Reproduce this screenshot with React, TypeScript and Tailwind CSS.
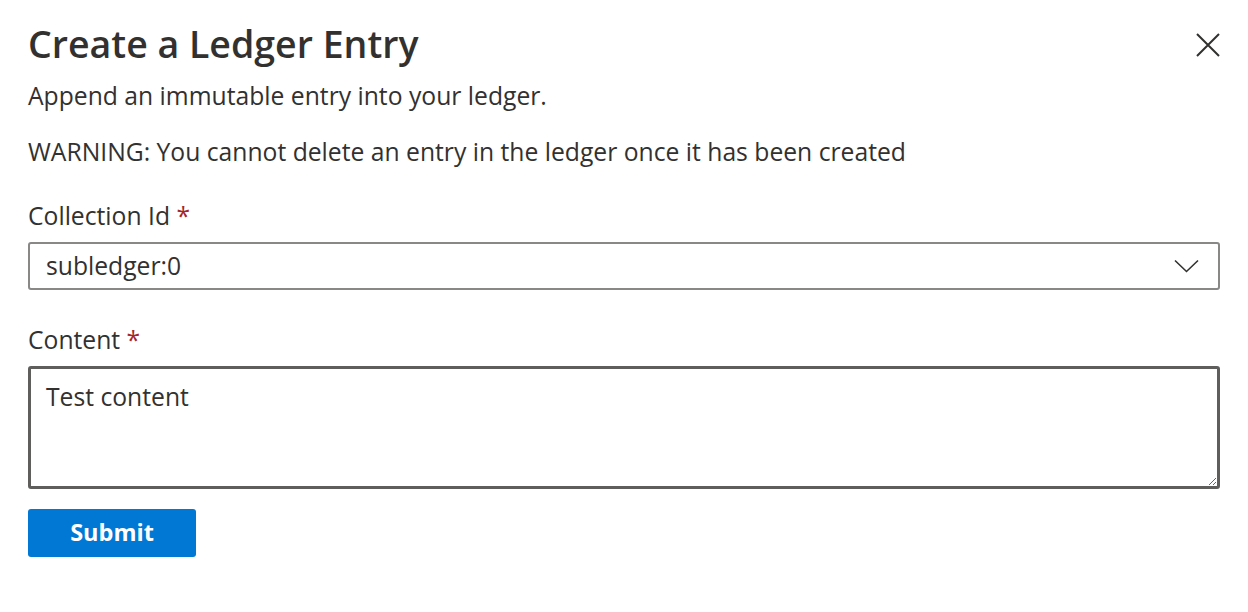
const FONT = "font-['Open_Sans',_'Noto_Sans',_sans-serif]";

function Label({ text }: { text: string }) {
  return (
    <label className="block text-[24.7px] leading-[30px] text-[#323130]">
      {text} <span className="text-[#a4262c]">*</span>
    </label>
  );
}

export default function App() {
  return (
    <div className={`${FONT} h-[612px] w-[1248px] bg-white px-[28px] pt-[18px] text-[#323130]`}>
      <div className="flex items-start justify-between">
        <h1 className="text-[37.5px] font-semibold leading-[52px] text-[#323130]">Create a Ledger Entry</h1>
        <button className="mr-[-1px] mt-[14px] text-[#323130]">
          <svg width="26" height="26" viewBox="0 0 26 26" fill="none" stroke="currentColor" strokeWidth="2">
            <path d="M2 2 24 24M24 2 2 24" />
          </svg>
        </button>
      </div>
      <p className="mt-[11px] text-[24.7px] leading-[30px]">Append an immutable entry into your ledger.</p>
      <p className="mt-[26px] text-[24.7px] leading-[30px]">
        WARNING: You cannot delete an entry in the ledger once it has been created
      </p>

      <div className="mt-[34px]">
        <Label text="Collection Id" />
        <div className="mt-[11px] flex h-[48px] w-[1192px] items-center justify-between rounded-[3px] border-2 border-[#8a8886] pl-[16px] pr-[19px]">
          <span className="text-[24.7px]">subledger:0</span>
          <svg width="25" height="14" viewBox="0 0 25 14" fill="none" stroke="#323130" strokeWidth="1.6">
            <path d="M1 1.5 12.5 12.5 24 1.5" />
          </svg>
        </div>
      </div>

      <div className="mt-[35px]">
        <Label text="Content" />
        <textarea
          defaultValue="Test content"
          className="mt-[11px] block h-[123px] w-[1192px] resize-y rounded-[3px] border-[3px] border-[#605e5c] px-[15px] py-[13px] text-[24.7px] leading-[30px] text-[#323130] outline-none"
        />
      </div>

      <button className="mt-[20px] flex h-[48px] w-[168px] items-center justify-center rounded-[3px] bg-[#0078d4] text-[23.5px] font-bold text-white">
        Submit
      </button>
    </div>
  );
}
